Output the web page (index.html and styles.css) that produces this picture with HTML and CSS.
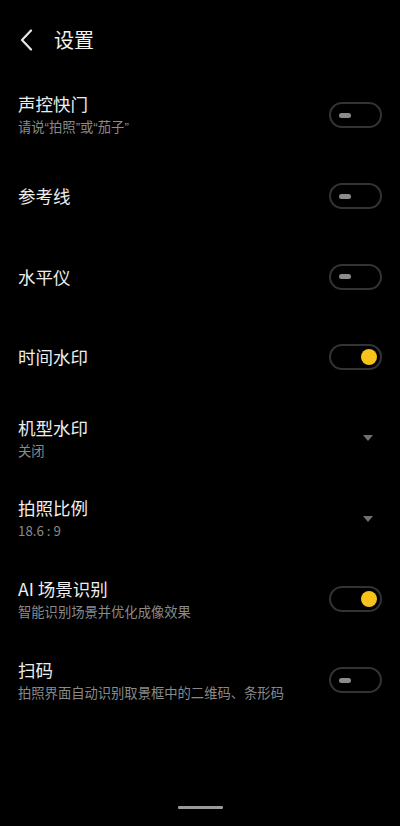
FILE: index.html
```html
<!DOCTYPE html>
<html lang="zh-CN">
<head>
<meta charset="utf-8">
<title>设置</title>
<link rel="stylesheet" href="styles.css">
</head>
<body>
<div class="screen">
  <header class="header">
    <svg class="back" width="14" height="22" viewBox="0 0 14 22"><path d="M12 1.5 L3 11 L12 20.5" fill="none" stroke="#e6e6e6" stroke-width="2.2" stroke-linecap="round" stroke-linejoin="round"/></svg>
    <h1 class="title">设置</h1>
  </header>
  <main class="list">
    <div class="row">
      <div class="text"><div class="label">声控快门</div><div class="sub">请说<span class="q">“</span>拍照<span class="q">”</span>或<span class="q">“</span>茄子<span class="q">”</span></div></div>
      <span class="switch"><span class="knob"></span></span>
    </div>
    <div class="row">
      <div class="text"><div class="label">参考线</div></div>
      <span class="switch"><span class="knob"></span></span>
    </div>
    <div class="row">
      <div class="text"><div class="label">水平仪</div></div>
      <span class="switch"><span class="knob"></span></span>
    </div>
    <div class="row">
      <div class="text"><div class="label">时间水印</div></div>
      <span class="switch on"><span class="knob"></span></span>
    </div>
    <div class="row">
      <div class="text"><div class="label">机型水印</div><div class="sub">关闭</div></div>
      <span class="caret"></span>
    </div>
    <div class="row">
      <div class="text"><div class="label">拍照比例</div><div class="sub">18.6 : 9</div></div>
      <span class="caret"></span>
    </div>
    <div class="row">
      <div class="text"><div class="label">AI 场景识别</div><div class="sub">智能识别场景并优化成像效果</div></div>
      <span class="switch on"><span class="knob"></span></span>
    </div>
    <div class="row">
      <div class="text"><div class="label">扫码</div><div class="sub">拍照界面自动识别取景框中的二维码、条形码</div></div>
      <span class="switch"><span class="knob"></span></span>
    </div>
  </main>
  <div class="home"></div>
</div>
</body>
</html>
```

FILE: styles.css
```css
* { box-sizing: border-box; }
html, body {
  margin: 0;
  padding: 0;
  background: #000;
}
body {
  font-family: "Noto Sans CJK SC", "Noto Sans", sans-serif;
  color: #ececec;
}
.screen {
  width: 400px;
  height: 826px;
  display: flex;
  flex-direction: column;
  overflow: hidden;
}
.header {
  height: 75px;
  padding: 5px 0 0 19px;
  display: flex;
  align-items: center;
}
.back {
  display: block;
  margin-right: 21px;
}
.title {
  margin: 0;
  font-size: 20px;
  font-weight: 400;
  line-height: 24px;
  color: #f2f2f2;
}
.list {
  display: flex;
  flex-direction: column;
}
.row {
  height: 80.7px;
  padding: 0 18px;
  display: flex;
  align-items: center;
  justify-content: space-between;
}
.text {
  display: flex;
  flex-direction: column;
}
.label {
  font-size: 17.5px;
  line-height: 24px;
  color: #ededed;
}
.sub {
  font-size: 13.3px;
  line-height: 20px;
  color: #8a8a8a;
  margin-top: 1px;
}
.q {
  font-family: "Liberation Sans", sans-serif;
}
.switch {
  width: 53px;
  height: 26px;
  border: 2px solid #333;
  border-radius: 13px;
  display: flex;
  align-items: center;
  padding: 0 8px;
}
.switch .knob {
  width: 12px;
  height: 5px;
  border-radius: 3px;
  background: #8c8c8c;
}
.switch.on {
  justify-content: flex-end;
  padding: 0 3px;
}
.switch.on .knob {
  width: 16px;
  height: 16px;
  border-radius: 50%;
  background: #f7c21a;
}
.caret {
  width: 0;
  height: 0;
  border-left: 5px solid transparent;
  border-right: 5px solid transparent;
  border-top: 6px solid #707070;
  margin-right: 9px;
}
.home {
  margin: auto auto 17px;
  width: 45px;
  height: 3px;
  background: #9a9a9a;
  border-radius: 1px;
}
```
